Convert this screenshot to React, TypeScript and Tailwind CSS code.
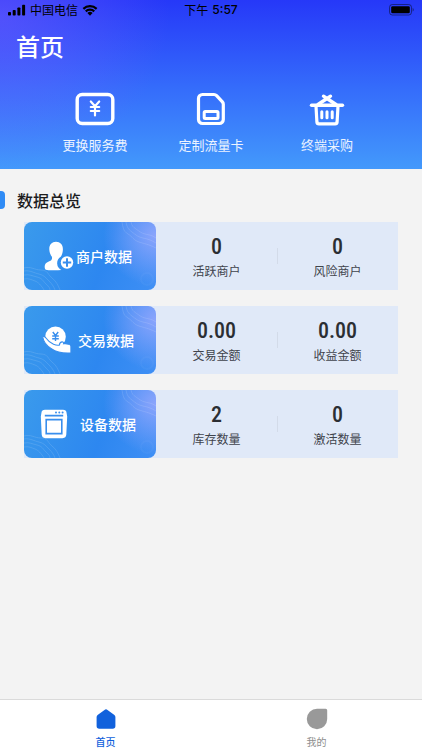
import type { ReactNode } from "react";

const sans = "font-['Noto_Sans_CJK_SC',sans-serif]";

function StatusBar() {
  return (
    <div className="grid h-5 grid-cols-3 items-center px-2 text-[12px] leading-5 text-black">
      <div className="flex items-center gap-1">
        <svg width="18" height="12" viewBox="0 0 18 12" aria-hidden="true">
          <rect x="0" y="8" width="3" height="3.5" rx="0.8" />
          <rect x="4.7" y="6" width="3" height="5.5" rx="0.8" />
          <rect x="9.4" y="3.5" width="3" height="8" rx="0.8" />
          <rect x="14.1" y="0.7" width="3" height="10.8" rx="0.8" />
        </svg>
        <span>中国电信</span>
        <svg width="16" height="12" viewBox="0 0 16 12" aria-hidden="true">
          <path d="M0.6 4.1a10.6 10.6 0 0 1 14.8 0l-1.5 1.6a8.4 8.4 0 0 0-11.8 0z" />
          <path d="M3 6.6a7.1 7.1 0 0 1 10 0l-1.5 1.6a5 5 0 0 0-7 0z" />
          <path d="M5.4 9.1a3.7 3.7 0 0 1 5.2 0L8 11.8z" />
        </svg>
      </div>
      <div className="flex items-center justify-center gap-1 whitespace-nowrap">
        <span>下午</span>
        <span className="font-['Inter',sans-serif] text-[12px] font-medium">5:57</span>
      </div>
      <svg className="justify-self-end" width="25" height="12" viewBox="0 0 25 12" aria-hidden="true">
        <rect x="0.5" y="0.5" width="22" height="10.5" rx="2.8" fill="none" stroke="#000" strokeOpacity="0.45" />
        <rect x="2.2" y="2.2" width="18.6" height="7.1" rx="1.4" />
        <path d="M23.6 4v3.6c.8-.3 1.2-1 1.2-1.8s-.4-1.500-1.200-1.800z" fillOpacity="0.45" />
      </svg>
    </div>
  );
}

function FeeIcon() {
  return (
    <svg width="40" height="34" viewBox="0 0 40 34" fill="none" stroke="#fff" strokeLinecap="round" strokeLinejoin="round" aria-hidden="true">
      <rect x="2.200" y="2.500" width="35.600" height="29" rx="5" strokeWidth="3.400" />
      <path d="M15.800 9.500l4.200 4.700 4.200-4.700M15.800 15h8.400M15.800 19h8.400M20 14.500v9" strokeWidth="2.200" />
    </svg>
  );
}

function SimIcon() {
  return (
    <svg width="30" height="34" viewBox="0 0 30 34" fill="none" stroke="#fff" strokeLinejoin="round" aria-hidden="true">
      <path d="M6.500 2.500h11.500c1 0 1.900.4 2.600 1.100l5.800 6.300c.6.700.9 1.500.9 2.400v15.200a4 4 0 0 1-4 4H6.500a4 4 0 0 1-4-4v-21a4 4 0 0 1 4-4z" strokeWidth="3.200" />
      <rect x="8.200" y="19.400" width="13.800" height="7" rx="1" strokeWidth="3" />
    </svg>
  );
}

function BasketIcon() {
  return (
    <svg width="36" height="34" viewBox="0 0 36 34" fill="none" stroke="#fff" strokeLinecap="round" strokeLinejoin="round" aria-hidden="true">
      <path d="M2.500 13.300h31" strokeWidth="3.400" />
      <path d="M7 14l.9 16a2 2 0 0 0 2 1.800h16.200a2 2 0 0 0 2-1.800l.9-16" strokeWidth="3.200" />
      <path d="M14.500 4.200l3.500 2.300 9 6M21.500 4.200L18 6.500l-9 6" strokeWidth="3.400" />
      <path d="M12.800 19.700v6M18 19.700v6M23.200 19.700v6" strokeWidth="3" />
    </svg>
  );
}

function MerchantIcon() {
  return (
    <svg width="30" height="30" viewBox="0 0 30 30" aria-hidden="true">
      <path d="M12 0.800c-4.300 0-7 3.200-6.700 7.800.1 2.900 1.200 5.600 2.600 7.100.5 2.500-.2 3.600-2.600 4.600C2.500 21.500.7 22.700.7 26.200c0 1.700.7 2.500 2.300 2.700 3.600.4 9.500.5 14.300.1a7.600 7.600 0 0 1-.6-13.200c1.400-1.800 2.100-4.300 2.200-7.200C19.100 4 16.300.8 12 .8z" fill="#fff" />
      <circle cx="23" cy="21.500" r="6.200" fill="#fff" />
      <path d="M18.800 21.500h8.400M23 17.300v8.400" stroke="#398eed" strokeWidth="2" />
    </svg>
  );
}

function TradeIcon() {
  return (
    <svg width="30" height="30" viewBox="0 0 30 30" aria-hidden="true">
      <circle cx="13.500" cy="11.800" r="10.300" fill="#fff" />
      <path d="M10.800 7l2.700 3.500L16.200 7M10.200 11h6.600M10.200 13.800h6.600M13.500 10.500v5.500" fill="none" stroke="#398eed" strokeWidth="1.400" />
      <path d="M.7 11.700c1.300-.7 2.500.1 3.500 1.600 1.800 2.800 4.300 4.600 7.300 5.900 2.300 1 4.100 1.300 5.800.9 .3-1.900 1.200-3.200 2.800-3.200 1.300 0 1.800.9 1.500 1.900 1.600-.3 3.200-.2 5 .4 1.500.3 2.300.9 2.300 2.200v6.600c-7.900.5-14.200-.7-19.500-4.300C4.500 20.500 1.300 16.800.7 11.700z" fill="#fff" stroke="#398eed" strokeWidth="1.100" />
    </svg>
  );
}

function DeviceIcon() {
  return (
    <svg width="28" height="30" viewBox="0 0 28 30" aria-hidden="true">
      <path d="M5 .8h18c2.200 0 3.300.9 3.500 2.700l.7 4-.9 18c-.2 2.400-1.300 3.500-3.800 3.700H5.500c-2.500-.2-3.600-1.300-3.800-3.700l-.9-18 .7-4C1.700 1.700 2.800.8 5 .8z" fill="#fff" />
      <path d="M4.800 6.600h18.400M6.200 10.600h15.600v14H6.200z" fill="none" stroke="#398eed" strokeWidth="1.600" />
      <g fill="#398eed">
        <circle cx="16" cy="3.600" r="1" />
        <circle cx="19.300" cy="3.600" r="1" />
        <circle cx="22.600" cy="3.600" r="1" />
      </g>
    </svg>
  );
}

function Ripples() {
  return (
    <svg className="absolute inset-0 h-full w-full" viewBox="0 0 132 68" preserveAspectRatio="none" fill="none" stroke="#fff" strokeOpacity="0.16" strokeWidth="0.800" aria-hidden="true">
      <path d="M0 46c7-2 10 2 17 2s7 5 11 8 6 7 8 12" />
      <path d="M0 49c6-1 10 2 15 3s7 4 10 7 5 6 6 9" />
      <path d="M0 53c6-1 8 1 13 2s6 4 9 7 4 4 4 6" />
      <path d="M0 57c5-1 8 1 11 2s6 4 9 9" />
      <path d="M98 0c1 5 1 9 6 12s5 6 11 8 9 2 17 6" />
      <path d="M102 0c1 5 2 7 6 10s6 5 11 6 8 2 13 5" />
      <path d="M107 0c1 4 2 5 5 7s5 4 9 5 7 1 11 4" />
      <circle cx="123" cy="57" r="6" strokeOpacity="0.03" strokeWidth="2" />
    </svg>
  );
}

const shortcuts: { label: string; icon: ReactNode }[] = [
  { label: "更换服务费", icon: <FeeIcon /> },
  { label: "定制流量卡", icon: <SimIcon /> },
  { label: "终端采购", icon: <BasketIcon /> },
];

const overview: { title: string; icon: ReactNode; gap: string; stats: [string, string][] }[] = [
  { title: "商户数据", icon: <MerchantIcon />, gap: "gap-0.5", stats: [["0", "活跃商户"], ["0", "风险商户"]] },
  { title: "交易数据", icon: <TradeIcon />, gap: "gap-1.5", stats: [["0.00", "交易金额"], ["0.00", "收益金额"]] },
  { title: "设备数据", icon: <DeviceIcon />, gap: "gap-3", stats: [["2", "库存数量"], ["0", "激活数量"]] },
];

export default function App() {
  return (
    <div className={`flex min-h-screen flex-col bg-[#f3f3f3] ${sans}`}>
      <header className="bg-[radial-gradient(ellipse_40%_90%_at_0%_10%,rgba(120,95,255,0.5),transparent),linear-gradient(to_bottom,#2638f8,#346afb_50%,#4399fb)] pb-3">
        <StatusBar />
        <h1 className="mt-2 px-4 text-[24px] leading-9 font-medium text-white">首页</h1>
        <nav className="mt-7 grid grid-cols-3 px-[37px]">
          {shortcuts.map((s) => (
            <button key={s.label} type="button" className="flex flex-col items-center gap-[7px] text-[13px] leading-6 text-white/90">
              {s.icon}
              {s.label}
            </button>
          ))}
        </nav>
      </header>

      <main className="flex-1">
        <div className="mt-[17px] flex items-center gap-3">
          <span className="h-[18px] w-[5px] rounded-r bg-[#2f8bf5]" />
          <h2 className="text-[16px] leading-7 font-medium text-[#1c1c1e]">数据总览</h2>
        </div>
        <div className="mt-2 flex flex-col gap-4 px-6">
          {overview.map((row) => (
            <section key={row.title} className="flex h-[68px] bg-[#e0e9f8]">
              <button type="button" className="relative w-[132px] shrink-0 overflow-hidden rounded-lg bg-[radial-gradient(ellipse_40%_75%_at_100%_20%,#8ba4fc,transparent),linear-gradient(110deg,#3a9aec,#2d87f0_60%,#3f8ff5)] text-white">
                <Ripples />
                <span className={`relative flex items-center justify-center pr-1 text-[14px] font-medium ${row.gap}`}>
                  {row.icon}
                  {row.title}
                </span>
              </button>
              <dl className="grid flex-1 grid-cols-2 items-center">
                {row.stats.map(([value, label], i) => (
                  <div key={label} className="flex items-center">
                    {i > 0 && <span className="-mr-px h-4 w-px bg-[#d3dbe9]" />}
                    <div className="flex flex-1 flex-col-reverse items-center pt-0.5">
                      <dt className="text-[12px] leading-5 text-[#3f444c]">{label}</dt>
                      <dd className="font-['Roboto_Condensed','Roboto',sans-serif] text-[22px] leading-7 font-medium text-[#2b2e33]">{value}</dd>
                    </div>
                  </div>
                ))}
              </dl>
            </section>
          ))}
        </div>
      </main>

      <footer className="grid h-[51px] grid-cols-2 border-t border-[#dadada] bg-white text-[10px] leading-4">
        <button type="button" className="flex flex-col items-center gap-1 pt-2 font-medium text-[#1161dc]">
          <svg width="22" height="22" viewBox="0 0 22 22" fill="currentColor" aria-hidden="true">
            <path d="M9.500 1.900a2.500 2.500 0 0 1 3 0l6.900 5.200c.6.500 1 1.200 1 2v9a2.700 2.700 0 0 1-2.700 2.700H4.300a2.700 2.700 0 0 1-2.700-2.700v-9c0-.8.400-1.500 1-2z" />
          </svg>
          首页
        </button>
        <button type="button" className="flex flex-col items-center gap-1 pt-2 text-[#8e8e8e]">
          <svg width="22" height="22" viewBox="0 0 22 22" fill="#999" aria-hidden="true">
            <path d="M11 .8h8.700a1.500 1.500 0 0 1 1.500 1.500V11A10.200 10.200 0 1 1 11 .8z" />
          </svg>
          我的
        </button>
      </footer>
    </div>
  );
}
